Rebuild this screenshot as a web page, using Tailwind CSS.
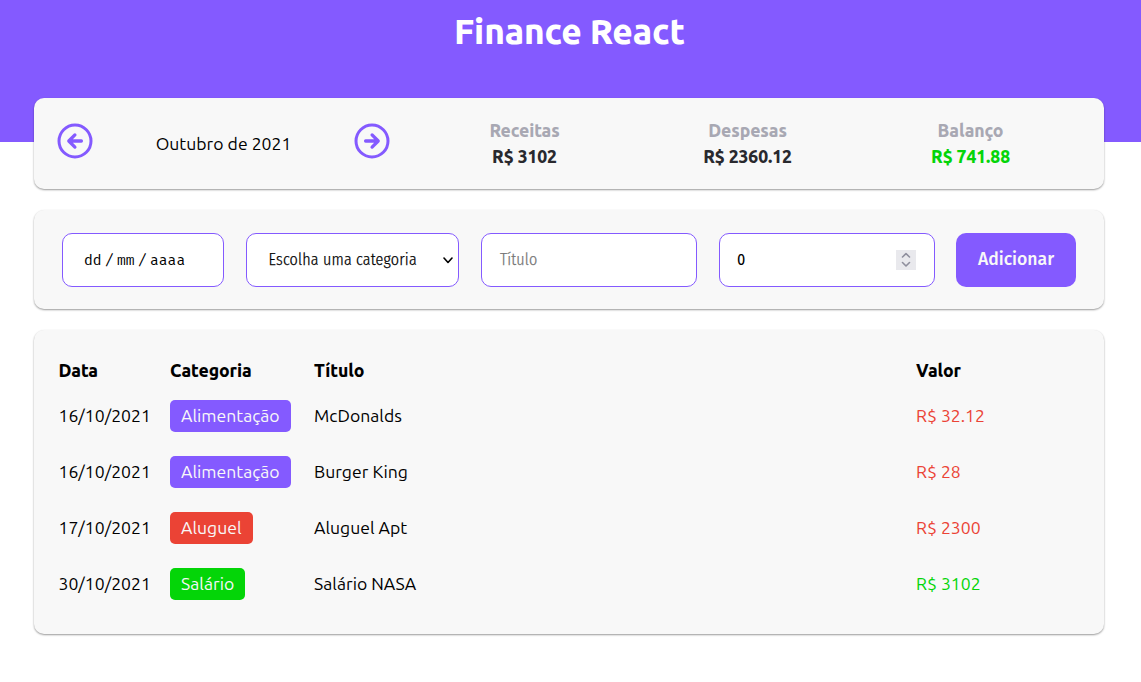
<!DOCTYPE html>
<html lang="pt-BR">
<head>
<meta charset="utf-8">
<title>Finance React</title>
<script src="https://cdn.jsdelivr.net/npm/@tailwindcss/browser@4"></script>
</head>
<body class="h-screen overflow-hidden bg-white font-['Ubuntu','Noto_Sans',sans-serif] text-[17.6px] leading-[26px] text-black">
<header class="h-[142px] bg-[#845aff] pt-2 text-center">
  <h1 class="pr-[2px] text-[35.2px] font-extrabold leading-[46px] tracking-[-0.15px] text-white">Finance React</h1>
</header>
<main class="-mt-11 ml-[34px] mr-[37px] flex flex-col gap-[21px]">
  <section class="flex h-[91px] rounded-[10px] bg-[#f8f8f8] shadow-[0_1px_2px_rgba(0,0,0,0.4)]">
    <div class="flex w-[356px] justify-between pl-[23px] pt-[25px]">
      <svg class="size-9" viewBox="0 0 36 36" fill="none" stroke="#845aff" stroke-width="3"><circle cx="18" cy="18" r="16"/><path d="M24.400 18H12M17.900 11.900 11.800 18l6.100 6.100" stroke-width="3.300" stroke-linecap="round" stroke-linejoin="round"/></svg>
      <p class="pt-2">Outubro de 2021</p>
      <svg class="size-9" viewBox="0 0 36 36" fill="none" stroke="#845aff" stroke-width="3"><circle cx="18" cy="18" r="16"/><path d="M11.600 18H24M18.100 11.900l6.100 6.100-6.100 6.100" stroke-width="3.300" stroke-linecap="round" stroke-linejoin="round"/></svg>
    </div>
    <div class="grid flex-1 grid-cols-3 pl-[23px] pr-[22px] pt-5 text-center font-extrabold tracking-[-0.1px]">
      <div><p class="text-[#a8a8b3]">Receitas</p><p class="text-[#29292e]">R$ 3102</p></div>
      <div><p class="text-[#a8a8b3]">Despesas</p><p class="text-[#29292e]">R$ 2360.12</p></div>
      <div><p class="text-[#a8a8b3]">Balanço</p><p class="text-[#04d508]">R$ 741.88</p></div>
    </div>
  </section>

  <section class="flex h-[99px] rounded-[10px] bg-[#f8f8f8] pl-7 pt-[23px] font-['Fira_Sans_Condensed','Noto_Sans',sans-serif] text-[16px] shadow-[0_1px_2px_rgba(0,0,0,0.4)]">
    <div class="mr-[22px] flex h-[54px] w-[162px] items-center rounded-[10px] border border-[#845aff] bg-white pl-[21px] font-['Fira_Mono','Noto_Sans_Mono',monospace] text-[14.67px]">
      <span class="w-[18px]">dd</span><span class="w-[15px] text-center">/</span><span class="w-[18px]">mm</span><span class="w-[15px] text-center">/</span><span>aaaa</span>
    </div>
    <div class="mr-[22px] flex h-[54px] w-[213px] items-center justify-between rounded-[10px] border border-[#845aff] bg-white pl-[21.500px] pr-[5px]">
      <span class="font-light tracking-[0.18px] [-webkit-text-stroke:0.25px_#000]">Escolha uma categoria</span>
      <svg class="h-[7px] w-[10px]" viewBox="0 0 10 7" fill="none" stroke="#000" stroke-width="1.600"><path d="M1 1l4 4.500L9 1" stroke-linecap="round" stroke-linejoin="round"/></svg>
    </div>
    <div class="mr-[22px] flex h-[54px] w-[216px] items-center rounded-[10px] border border-[#845aff] bg-white pl-[18px] font-light tracking-[0.1px] text-[#757575] [-webkit-text-stroke:0.25px_#757575]">Título</div>
    <div class="mr-[21px] flex h-[54px] w-[216px] items-center justify-between rounded-[10px] border border-[#845aff] bg-white pl-[17px] pr-[18px]">
      <span>0</span>
      <svg class="size-5 bg-[#e9e9ed]" viewBox="0 0 20 20" fill="none" stroke="#8f8f9d" stroke-width="1.600"><path d="M6.500 7 10 3.700 13.500 7M6.500 12.500l3.500 3.500 3.500-3.500" stroke-linecap="round" stroke-linejoin="round"/></svg>
    </div>
    <button class="h-[54px] w-[120px] rounded-[10px] bg-[#845aff] font-['Fira_Sans','Noto_Sans',sans-serif] text-[17.6px] font-medium text-[#f8f8f8]">Adicionar</button>
  </section>

  <section class="h-[304px] rounded-[10px] bg-[#f8f8f8] pl-[24.500px] pt-7 shadow-[0_1px_2px_rgba(0,0,0,0.4)]">
    <div class="grid grid-cols-[111.500px_144px_602px_1fr] font-extrabold tracking-[-0.1px]">
      <span>Data</span><span>Categoria</span><span>Título</span><span>Valor</span>
    </div>
    <div class="mt-1 grid auto-rows-[56px] grid-cols-[111.500px_144px_602px_1fr] items-center">
      <span>16/10/2021</span><span class="h-8 justify-self-start rounded-[5px] bg-[#845aff] px-[11px] leading-8 text-[#f8f8f8]">Alimentação</span><span>McDonalds</span><span class="text-[#eb4335]">R$ 32.12</span>
      <span>16/10/2021</span><span class="h-8 justify-self-start rounded-[5px] bg-[#845aff] px-[11px] leading-8 text-[#f8f8f8]">Alimentação</span><span>Burger King</span><span class="text-[#eb4335]">R$ 28</span>
      <span>17/10/2021</span><span class="h-8 justify-self-start rounded-[5px] bg-[#eb4335] px-[11px] leading-8 text-[#f8f8f8]">Aluguel</span><span>Aluguel Apt</span><span class="text-[#eb4335]">R$ 2300</span>
      <span>30/10/2021</span><span class="h-8 justify-self-start rounded-[5px] bg-[#04d508] px-[11px] leading-8 text-[#f8f8f8]">Salário</span><span>Salário NASA</span><span class="text-[#04d508]">R$ 3102</span>
    </div>
  </section>
</main>
</body>
</html>
